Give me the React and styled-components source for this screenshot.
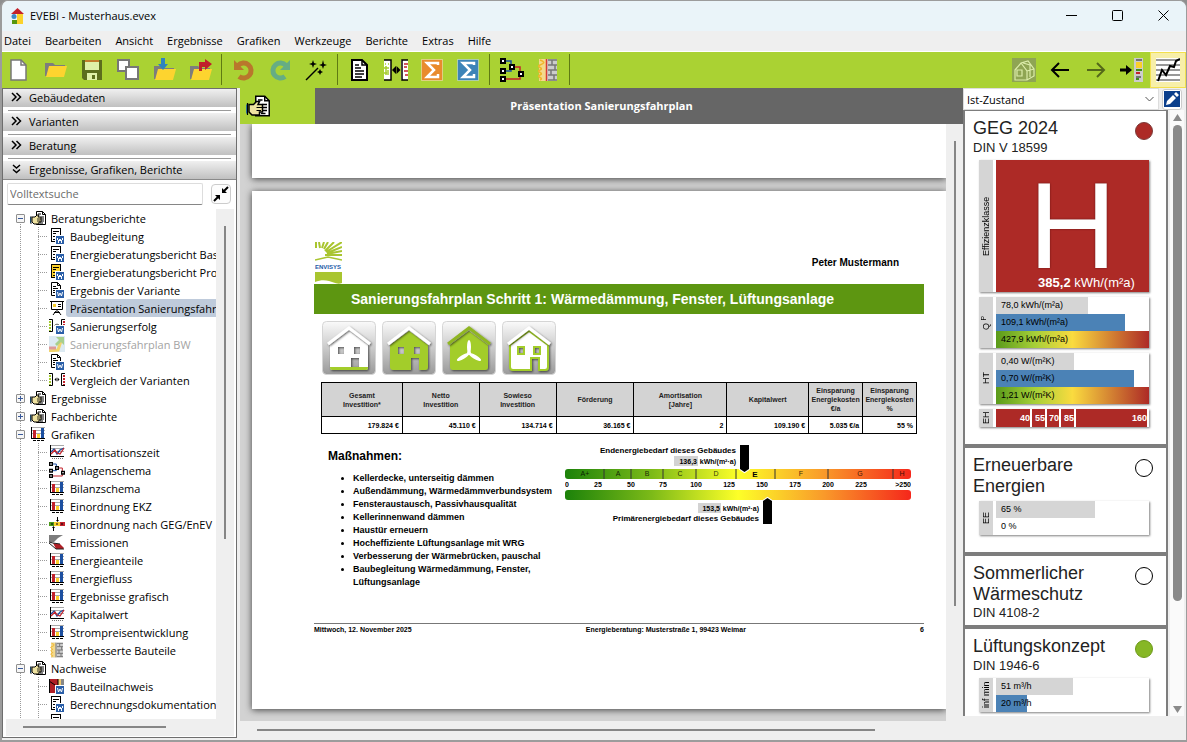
import React from 'react';
import styled, { createGlobalStyle } from 'styled-components';

const GlobalStyle = createGlobalStyle`
  * {
    box-sizing: border-box;
  }
  body {
    margin: 0;
    background: #8f8f8f;
    color: #000;
    font-family: 'Open Sans', 'Noto Sans', sans-serif;
    font-size: 11px;
  }
  button, input, select {
    font: inherit;
    color: inherit;
  }
`

/* ---------- window frame ---------- */

const Window = styled.div`
  display: flex;
  flex-direction: column;
  height: 100vh;
  overflow: hidden;
  border: solid #9c9c9c;
  border-width: 1px 1px 2px 2px;
  border-radius: 8px 8px 0 0;
  background: #efefef;
`

const TitleBar = styled.header`
  display: flex;
  align-items: center;
  flex: none;
  height: 30px;
  padding-left: 7px;
  background: #eaf4f9;
`

const Title = styled.h1`
  flex: 1;
  margin: 0 0 0 4px;
  padding-bottom: 2px;
  font-size: 11px;
  font-weight: 400;
`

const WindowButton = styled.button`
  display: grid;
  place-items: center;
  width: 46px;
  height: 30px;
  padding: 0 0 2px;
  border: 0;
  background: none;
`

const MenuBar = styled.nav`
  display: flex;
  align-items: center;
  flex: none;
  gap: 14px;
  height: 21px;
  padding: 0 0 2px 2px;
  border-bottom: 1px solid #fff;
`

const MenuItem = styled.button`
  padding: 0;
  border: 0;
  background: none;
`

const Toolbar = styled.div`
  display: flex;
  flex: none;
  height: 36px;
  background: #aad233;
`

const ToolButton = styled.button`
  display: grid;
  place-items: center;
  width: 36px;
  padding: 0;
  border: ${p => (p.$active ? '1px solid #f3e04e' : '0')};
  background: ${p => (p.$active ? '#f7efa9' : 'none')};
  opacity: ${p => (p.$faded ? 0.5 : 1)};
`

const ToolDivider = styled.div`
  width: 1px;
  margin: 2px 4px 3px 3px;
  background: #5f7a12;
`

const Spacer = styled.div`
  flex: 1;
`

const Main = styled.div`
  display: flex;
  flex: 1;
  min-height: 0;
`

/* ---------- left column ---------- */

const Sidebar = styled.aside`
  display: flex;
  flex-direction: column;
  flex: none;
  width: 235px;
  margin-bottom: 2px;
  border: 1px solid #6e6e6e;
  background: #fff;
`

const SectionButton = styled.button`
  display: flex;
  align-items: center;
  flex: none;
  gap: 7px;
  height: 18px;
  padding: 0 0 2px 8px;
  border: 0;
  background: linear-gradient(#f0f0f0, #c0c0c0);
  text-align: left;
`

const SectionRule = styled.div`
  flex: none;
  height: 1px;
  margin: 3px 5px 2px;
  background: #9a9a9a;
`

const SearchRow = styled.div`
  display: flex;
  align-items: center;
  flex: none;
  gap: 8px;
  height: 30px;
  padding: 0 5px 1px 4px;
  border-top: 1px solid #8a8a8a;
`

const SearchInput = styled.input`
  flex: 1;
  min-width: 0;
  height: 22px;
  padding: 0 2px 1px;
  border: 1px solid #ddd;
  border-bottom-color: #868686;
  border-radius: 2px;
  background: #fff;
  outline: 0;
  &::placeholder {
    color: #6b6b6b;
    opacity: 1;
  }
`

const CollapseButton = styled.button`
  display: grid;
  place-items: center;
  width: 20px;
  height: 20px;
  padding: 0;
  border: 1px solid #ccc;
  border-radius: 4px;
  background: #fdfdfd;
`

const TreeFrame = styled.div`
  display: grid;
  grid-template: minmax(0, 1fr) 17px / minmax(0, 1fr) 18px;
  flex: 1;
  min-height: 0;
  margin: 0 2px 1px 3px;
  background: #efefef;
`

const Tree = styled.ul`
  margin: 0;
  padding: 0;
  list-style: none;
  overflow: hidden;
  background: #fff;
`

const Row = styled.li`
  display: flex;
  align-items: center;
  height: 18px;
`

const dots = 'repeating-linear-gradient(#9a9a9a 0 1px, transparent 1px 2px)'
const dotsAcross = 'repeating-linear-gradient(90deg, #9a9a9a 0 1px, transparent 1px 2px)'

const RootGutter = styled.div`
  display: flex;
  align-items: center;
  flex: none;
  width: 24px;
  height: 18px;
  padding-left: 10px;
  background: ${dots} 14px ${p => (p.$first ? '9px' : '0')} / 1px 100% no-repeat;
`

const ChildGutter = styled.div`
  flex: none;
  width: 19px;
  height: 18px;
  background:
    ${dots} 8px 0 / 1px ${p => (p.$last ? '50%' : '100%')} no-repeat,
    ${dotsAcross} 8px 9px / 9px 1px no-repeat;
`

const Expander = styled.button`
  display: grid;
  place-items: center;
  width: 9px;
  height: 9px;
  padding: 0;
  border: 1px solid #8f8f8f;
  border-radius: 1px;
  background: #f6f6f6;
`

const RowIcon = styled.span`
  display: grid;
  flex: none;
  width: 17px;
  height: 16px;
`

const RowLabel = styled.button`
  flex: 1 0 auto;
  height: 18px;
  padding: 0 4px;
  border: 0;
  border-radius: 3px 0 0 3px;
  background: ${p => (p.$selected ? '#bfcbdb' : 'none')};
  color: ${p => (p.$disabled ? '#a3a3a3' : '#000')};
  line-height: 17px;
  text-align: left;
  white-space: nowrap;
`

const VTrack = styled.div`
  display: flex;
  justify-content: center;
  padding-top: ${p => p.$top};
`

const VThumb = styled.div`
  width: 2px;
  height: ${p => p.$length};
  background: #868686;
`

const HTrack = styled.div`
  display: flex;
  align-items: center;
  padding: 0 0 2px 17px;
`

const HThumb = styled.div`
  width: ${p => p.$length};
  height: 2px;
  background: #868686;
`

/* ---------- report view ---------- */

const Viewer = styled.main`
  display: flex;
  flex-direction: column;
  flex: 1;
  min-width: 0;
  margin-left: 3px;
`

const ViewerHeader = styled.div`
  display: flex;
  flex: none;
  height: 36px;
  background: #666;
`

const ViewerBadge = styled.div`
  display: flex;
  align-items: center;
  width: 75px;
  padding-left: 6px;
  background: #aad233;
`

const ViewerTitle = styled.h2`
  flex: 1;
  margin: 0;
  padding-right: 75px;
  color: #fff;
  font-size: 11px;
  font-weight: 700;
  line-height: 35px;
  text-align: center;
`

const ViewerBody = styled.div`
  display: grid;
  grid-template: minmax(0, 1fr) 19px / minmax(0, 1fr) 17px;
  flex: 1;
  min-height: 0;
`

const Canvas = styled.div`
  display: flex;
  flex-direction: column;
  gap: 13px;
  padding-left: 12px;
  overflow: hidden;
  background: #d2d2d2;
`

const Sheet = styled.article`
  display: flex;
  flex-direction: column;
  flex: none;
  min-height: ${p => p.$height};
  padding: 50px 22px 73px 62px;
  background: #fff;
  box-shadow: 0 1px 7px rgba(0, 0, 0, 0.7);
  font-family: 'Liberation Sans', Arial, sans-serif;
  font-weight: 700;
`

const PreviousSheet = styled(Sheet)`
  padding: 0;
`

const SheetHead = styled.div`
  display: flex;
  align-items: center;
  justify-content: space-between;
  height: 43px;
  padding: 0 25px 0 1px;
  font-size: 10px;
`

const Banner = styled.h3`
  margin: 0;
  padding-left: 37px;
  background: #5d9611;
  color: #fff;
  font-size: 14px;
  line-height: 30px;
`

const MeasureIcons = styled.div`
  display: flex;
  gap: 6px;
  padding: 7px 8px;
`

const CostTable = styled.table`
  margin: 0 7px;
  border-collapse: collapse;
  table-layout: fixed;
  font-size: 7px;
  line-height: 9px;
  th, td {
    border: 1px solid #000;
  }
  th {
    height: 34px;
    padding: 0;
    background: #d3d3d3;
    color: #222;
  }
  td {
    height: 17px;
    padding: 0 3px;
    text-align: right;
  }
`

const SheetColumns = styled.div`
  display: flex;
  padding: 10px 7px 0 14px;
`

const Measures = styled.section`
  flex: 0 1 237px;
`

const MeasuresTitle = styled.h4`
  margin: 5px 0 9px;
  font-size: 12px;
  line-height: 14px;
`

const MeasureList = styled.ul`
  margin: 0;
  padding: 0 0 0 25px;
  font-size: 9px;
  line-height: 13px;
`

const SheetFoot = styled.footer`
  display: flex;
  justify-content: space-between;
  margin-top: auto;
  border-top: 1px solid #777;
  font-size: 7px;
  line-height: 12px;
`

/* ---------- right column ---------- */

const Panel = styled.aside`
  display: flex;
  flex-direction: column;
  flex: none;
  width: 223px;
  margin-bottom: 24px;
`

const VariantRow = styled.div`
  display: flex;
  flex: none;
  align-items: center;
  gap: 3px;
  height: 22px;
`

const VariantPicker = styled.label`
  display: grid;
  flex: 0 0 196px;
  align-items: center;
  background: #fff;
  > * {
    grid-area: 1 / 1;
  }
  svg {
    justify-self: end;
    margin-right: 5px;
    pointer-events: none;
  }
`

const VariantSelect = styled.select`
  width: 100%;
  height: 22px;
  padding: 0 3px;
  border: 1px solid #ddd;
  background: #fff;
  appearance: none;
`

const EditButton = styled.button`
  display: grid;
  place-items: center;
  width: 20px;
  height: 21px;
  padding: 0;
  border: 1px solid #ccc;
  border-radius: 3px;
  background: #fff;
`

const PanelBody = styled.div`
  display: grid;
  grid-template-columns: 205px minmax(0, 1fr);
  flex: 1;
  min-height: 0;
`

const Cards = styled.div`
  display: flex;
  flex-direction: column;
  gap: 4px;
  padding: 1px 2px 0;
  overflow: hidden;
  background: #7d7d7d;
`

const Card = styled.section`
  flex: none;
  padding: 7px 13px ${p => p.$bottom || '17px'} 8px;
  background: #fff;
  color: #222;
  font-family: 'Liberation Sans', Arial, sans-serif;
`

const CardHead = styled.div`
  display: flex;
  justify-content: space-between;
`

const CardTitle = styled.h3`
  margin: 0;
  font-size: 18px;
  font-weight: 400;
  line-height: 21px;
`

const CardNorm = styled.div`
  font-size: 13px;
  line-height: 16px;
`

const Lamp = styled.span`
  flex: none;
  width: 18px;
  height: 18px;
  margin-top: 4px;
  border: 1px solid ${p => p.$edge};
  border-radius: 50%;
  background: ${p => p.$color};
`

const Gauge = styled.div`
  display: flex;
  gap: 3px;
  margin: 4px 4px 0 6px;
  box-shadow: 1px 1px 2px rgba(0, 0, 0, 0.5);
  & + & {
    margin-top: 5px;
  }
`

const GaugeName = styled.div`
  flex: none;
  width: 14px;
  background: #d5d5d5;
  color: #000;
  font-size: 9px;
  line-height: 14px;
  text-align: center;
  transform: rotate(180deg);
  writing-mode: vertical-rl;
  sub {
    font-size: 7px;
    line-height: 1px;
    vertical-align: 2px;
  }
`

const ClassBox = styled.div`
  display: flex;
  flex-direction: column;
  align-items: center;
  justify-content: flex-end;
  flex: 1;
  height: 132px;
  padding-bottom: 1px;
  background: #ad2a26;
  color: #fff;
`

const ClassLetter = styled.div`
  font-size: 122px;
  line-height: 98px;
  text-shadow: 0 0 2px #5a1010;
`

const ClassValue = styled.div`
  padding-left: 28px;
  font-size: 13px;
  line-height: 16px;
`

const Bars = styled.div`
  flex: 1;
  background: #fff;
`

const rainbow = 'linear-gradient(90deg, #5a9a1a, #a5cf38 25%, #fadb3f 50%, #ad2a26)'

const fills = {
  grey: '#d5d5d5',
  blue: '#4b82b6',
  rainbow,
  none: 'transparent',
}

const Bar = styled.div`
  height: 17px;
  padding-left: 5px;
  background: ${p => fills[p.$fill]};
  color: #000;
  font-size: 9px;
  line-height: 16px;
  white-space: nowrap;
`

const Steps = styled.div`
  display: flex;
  gap: 2px;
  flex: 1;
  padding-right: 2px;
`

const Step = styled.div`
  flex: ${p => p.$grow} 0 0;
  background: #ad2a26;
  color: #fff;
  font-size: 9px;
  font-weight: 700;
  line-height: 18px;
  text-align: right;
`

const PanelScroll = styled.div`
  display: flex;
  flex-direction: column;
  align-items: center;
  gap: 4px;
  margin: 0 2px;
  padding: 4px 0 3px;
  background: #fafafa;
`

const PanelThumb = styled.div`
  flex: 0 1 476px;
  width: 9px;
  margin-bottom: auto;
  border-radius: 5px;
  background: #8a8a8a;
`

/* ---------- drawings ---------- */

const Svg = ({ size = 24, children, ...rest }) => (
  <svg width={size} height={size} viewBox={`0 0 ${size} ${size}`} fill="none" aria-hidden="true" {...rest}>
    {children}
  </svg>
)

const AppLogo = () => (
  <Svg size={17}>
    <path d="M2 6 8.500 0 15 6z" fill="#c4222a" />
    <path d="M8 6h6v10H8z" fill="#fbd22c" />
    <circle cx="5" cy="8.500" r="2.500" fill="#3c8ac8" />
    <path d="M3 12h5v4H3z" fill="#56960f" />
  </Svg>
)

const NewFile = () => (
  <Svg>
    <path d="M3 2h10l5 5v15H3z" fill="#fff" stroke="#777" strokeWidth="1.500" />
    <path d="M13 2v5h5" stroke="#777" strokeWidth="1.500" />
  </Svg>
)

const Folder = () => (
  <>
    <path d="M2 8h8l2 2h10v3H6L4 21H2z" fill="#7d7d7d" />
    <path d="M6 11h18l-3 11H3z" fill="#fdd42f" />
  </>
)

const OpenFile = () => (
  <Svg>
    <g transform="translate(-1 -3)"><Folder /></g>
  </Svg>
)

const SaveFile = () => (
  <Svg>
    <path d="M2 2h20v20H4l-2-2z" fill="#5c6e1d" />
    <path d="M5 4h14v8H5z" fill="#dff0a8" />
    <path d="M5 2h14v2H5z" fill="#c27c2c" />
    <path d="M7 15h10v7H7z" fill="#dff0a8" />
    <path d="M12 17h3v4h-3z" fill="#5c6e1d" />
  </Svg>
)

const CopyFile = () => (
  <Svg>
    <path d="M2 2h11v11H2z" fill="#fff" stroke="#777" strokeWidth="2" />
    <path d="M10 9h12v12H10z" fill="#fff" stroke="#777" strokeWidth="2" />
  </Svg>
)

const ImportFile = () => (
  <Svg>
    <Folder />
    <path d="M9 0h4v6h3l-5 6-5-6h3z" fill="#2f84c0" />
  </Svg>
)

const ExportFile = () => (
  <Svg>
    <Folder />
    <path d="M11 13V4h6V1l7 5-7 6V9h-3v4z" fill="#c01f2b" />
  </Svg>
)

const Undo = () => (
  <Svg>
    <path d="M6 7.500a7.500 7.500 0 1 1 1 11" stroke="#b9772c" strokeWidth="5" />
    <path d="M2 2v10h10z" fill="#b9772c" />
  </Svg>
)

const Redo = () => (
  <Svg>
    <path d="M18 7.500a7.500 7.500 0 1 0-1 11" stroke="#66ad83" strokeWidth="5" />
    <path d="M22 2v10H12z" fill="#66ad83" />
  </Svg>
)

const Wand = () => (
  <Svg>
    <path d="M2 22 14 10" stroke="#000" strokeWidth="1.500" />
    <path d="m9 2 1 3 3 1-3 1-1 3-1-3-3-1 3-1zM19 2l1 4 3 1-3 1-1 3-1-3-3-1 3-1zM16 11l1 2 2 1-2 1-1 2-1-2-2-1 2-1z" fill="#000" />
  </Svg>
)

const Report = () => (
  <Svg>
    <path d="M4 2h10l5 5v15H4z" fill="#fff" stroke="#000" strokeWidth="2" />
    <path d="M14 2v5h5M7 7h4M7 10h6M7 13h9M7 16h9M7 19h7" stroke="#000" strokeWidth="1.500" />
  </Svg>
)

const Compare = () => (
  <Svg>
    <path d="M0 2h7v20H0z" fill="#fff" />
    <path d="M17 2h7v20h-7z" fill="#fff" />
    <path d="M0 2h7v20H0M24 2h-6v20h6" stroke="#000" strokeWidth="1.500" />
    <path d="M1 6h1m2 0h1M0 10h5M2 8v9M4 12v5M0 15h3" stroke="#a4cc2d" strokeWidth="1.500" />
    <path d="M20 6h4M20 9h3M20 13h4M21 17h3" stroke="#c3222b" strokeWidth="1.500" />
    <path d="m12 8-4 4 4 4zM12.500 8l4 4-4 4z" fill="#000" />
  </Svg>
)

const Sum = ({ color }) => (
  <Svg>
    <path d="M1.500 1.500h21v21h-21z" fill={color} stroke="#fff" strokeOpacity=".4" />
    <path d="M18 7V5H7l7 7-7 7h11v-3" stroke="#fff" strokeWidth="2.500" />
  </Svg>
)

const Schema = ({ size = 24 }) => (
  <svg width={size} height={size} viewBox="0 0 24 24" fill="none" aria-hidden="true">
    <path d="M3 3h8v6h4M3 13h8v-3" stroke="#1c4fa0" strokeWidth="1.500" />
    <path d="M13 9h7v12H3" stroke="#c3222b" strokeWidth="1.500" />
    {[[0, 0], [0, 10], [0, 18], [9, 6], [18, 13]].map(([x, y]) => (
      <path key={`${x}-${y}`} d={`M${x + 1} ${y + 1}h4v4h-4z`} fill="#fff" stroke="#000" strokeWidth="2" />
    ))}
  </svg>
)

const Wall = ({ size = 24 }) => (
  <svg width={size} height={size} viewBox="0 0 24 24" fill="none" aria-hidden="true">
    <path d="M3 1h18v22H3z" fill="#ccc" />
    <path d="M3 1h7v22H3z" fill="#f3d98c" />
    <path d="M4 2c5 2 5 3 0 5s5 3 0 5 5 3 0 5 5 3 0 5" stroke="#f1b52b" strokeWidth="1.500" />
    <path d="M10.500 1v22" stroke={size > 16 ? '#d93b34' : '#777'} strokeWidth="1.500" />
    <path d="M12 2h9M12 7h9M12 12h9M12 17h9M12 22h9M16 2v5M19 7v5M15 12v5M18 17v5" stroke="#777" strokeWidth="1.500" />
  </svg>
)

const House3d = () => (
  <Svg>
    <path d="M0 0h24v24H0z" fill="#8fa553" />
    <path d="M3 12 9 5l7-2 6 8v7l-7 4H3zM9 5l6 8v9M3 12v10M15 13l7-2M5 12h5v6H5zM11 5l7 2v12" stroke="#dcecaa" strokeWidth="1.200" />
  </Svg>
)

const Arrow = ({ flip }) => (
  <Svg>
    <path d={flip ? 'M3 12h17M13 5l7 7-7 7' : 'M21 12H4M11 5l-7 7 7 7'} stroke="#000" strokeWidth="2" />
  </Svg>
)

const DockRight = () => (
  <Svg>
    <path d="M0 12h6" stroke="#000" strokeWidth="3" />
    <path d="m6 7 6 5-6 5z" fill="#000" />
    <path d="M14 0h9v24h-9z" fill="#ccc" />
    <path d="M16 2h6M16 19h5" stroke="#555" strokeWidth="1.500" />
    <path d="M16 4h6v6h-6z" fill="#fbcf2b" />
    <path d="M16 12h6" stroke="#3f8c1c" strokeWidth="2" />
    <path d="M16 15h4" stroke="#c3222b" strokeWidth="2" />
    <path d="M16 21h3" stroke="#3f8c1c" strokeWidth="2" />
  </Svg>
)

const TrendChart = () => (
  <Svg>
    <path d="M0 0h24v24H0z" fill="#fff" />
    <path d="M0 2h24M0 7h24M0 12h24M0 17h24M0 22h24" stroke="#777" strokeWidth="1.500" />
    <path d="m2 23 4-11 4 5 4-9 4 1 2-6 4-2" stroke="#000" strokeWidth="2" />
  </Svg>
)

const Hand = ({ size = 16 }) => (
  <svg width={size} height={size} viewBox="0 0 16 16" fill="none" aria-hidden="true">
    <path d="M6.500 1.500h6l3 3v10h-9z" fill="#fff" stroke="#000" />
    <path d="M12.500 1.500v3h3M8 4h3M11 7h3M11 9h3M11 11h3M10 13h3" stroke="#000" />
    <path d="M2 7h3l2-2h2L8 7h3v5H9v2H4l-2-2z" fill="#efe3a0" stroke="#000" />
    <path d="M0 7h1v6H0z" fill="#2b78a8" />
    <path d="M1 6v8M7 9h4M7 11h3" stroke="#000" strokeWidth=".8" />
  </svg>
)

const WordMark = () => (
  <>
    <path d="M6 7h10v9H6z" fill="#fff" />
    <path d="M7 8h8v8H7z" fill="#2b5fa8" />
    <path d="m8.500 10 1 4 1.500-3 1.500 3 1-4" stroke="#fff" />
  </>
)

const DocIcon = ({ paper = '#fff' }) => (
  <Svg size={16} shapeRendering="crispEdges">
    <path d="M2.500.500h9v13h-9z" fill={paper} stroke="#000" />
    <path d="M4 3h6M4 5.500h3M4 8h6M4 11h2" stroke="#000" />
    <WordMark />
  </Svg>
)

const FoldedDocIcon = () => (
  <Svg size={16}>
    <path d="M2.500.500h6l3 3v10h-9z" fill="#fff" stroke="#000" />
    <path d="M8.500.500v3h3M4 4.500h3M4 6.500h5M4 8.500h2M4 10.500h2" stroke="#000" />
    <WordMark />
  </Svg>
)

const BoardIcon = () => (
  <Svg size={16}>
    <path d="M1 1.500h14M2.500 2v7.500h11V2" fill="#fff" stroke="#000" />
    <path d="M4 4h3v3H4z" fill="#f4cb2d" />
    <path d="M9 4.500h3M9 6.500h3M8 10v2M7 11l-3 4M9 11l3 4M5 12.500h6" stroke="#000" />
  </Svg>
)

const CompareIcon = ({ word }) => (
  <Svg size={16}>
    <path d="M0 1.500h3.500v12H0M16 1.500h-3.500v12H16" stroke="#000" />
    <path d="M1 3v10" stroke="#a4cc2d" strokeWidth="2" strokeDasharray="2 1" />
    <path d="M15 3v10" stroke="#c3222b" strokeWidth="2" strokeDasharray="2 1" />
    <path d="m7.500 5.500-2 2 2 2zM8.500 5.500l2 2-2 2z" fill="#000" />
    {word && <WordMark />}
  </Svg>
)

const RoadmapIcon = () => (
  <Svg size={16}>
    <path d="M0 0h16v16H0z" fill="#dceaf2" />
    <path d="m0 15 9-1 3-9" stroke="#f0d36b" strokeWidth="3" />
    <path d="M0 12h7" stroke="#dd9a9a" strokeWidth="3" />
    <path d="M7 1h8v8l-3-3-4 4-2-2 4-4z" fill="#a8cf8c" />
  </Svg>
)

const ChartIcon = () => (
  <Svg size={16} shapeRendering="crispEdges">
    <path d="M1 1.500h14M1 4.500h14M1 7.500h14" stroke="#aaa" />
    <path d="M3 4h3v8H3z" fill="#c3222b" />
    <path d="M7 8h3v4H7z" fill="#fbcf2b" />
    <path d="M11 2h3v10h-3z" fill="#1c4fa0" />
    <path d="M1.500 1v12M1 12.500h14" stroke="#000" />
    <path d="M3 14.500h12" stroke="#000" strokeDasharray="3 1" />
  </Svg>
)

const CurveIcon = () => (
  <Svg size={16}>
    <path d="M1 1.500h14M1 4.500h14M1 7.500h14" stroke="#aaa" />
    <path d="M1.500 1v11.500H15" stroke="#000" />
    <path d="m2 8 3-3 3 5 3-4 4-2" stroke="#1c4fa0" strokeWidth="1.300" />
    <path d="m2 10 4-4 2 3 3 1 4-6" stroke="#c3222b" strokeWidth="1.300" />
    <path d="M3 14.500h12" stroke="#777" strokeDasharray="1 1" />
  </Svg>
)

const ScaleIcon = () => (
  <Svg size={16}>
    <path d="M0 6h5v4H0z" fill="#4c9a1c" />
    <path d="M5 6h6v4H5z" fill="#fbcf2b" />
    <path d="M11 6h5v4h-5z" fill="#c3222b" />
    <path d="M8.500 1v4M4.500 11v4M2 8h2M7 8h2M12 8h2" stroke="#000" />
    <path d="M7 4h3L8.500 6zM3 12h3l-1.500-2z" fill="#000" />
  </Svg>
)

const SmokeIcon = () => (
  <Svg size={16}>
    <path d="M0 1h14L9 4 5 8H0z" fill="#7d7d7d" />
    <path d="m4 9 7 1 4 4-1 1H7z" fill="#b01f26" />
    <path d="m0 8 4 1 7 1M0 9l7 6h8" stroke="#222" />
  </Svg>
)

const PartIcon = () => (
  <Svg size={16}>
    <path d="M0 1h9v14H0z" fill="#b01f26" />
    <path d="M9 1h3v14H9z" fill="#f0c96e" />
    <path d="M12 1h3v14h-3z" fill="#888" />
    <path d="M.5 1v14M0 3l9 6V1" stroke="#000" />
    <WordMark />
  </Svg>
)

const Chevrons = ({ down }) => (
  <svg width="11" height="10" viewBox="0 0 11 10" fill="none" aria-hidden="true">
    <path
      d={down ? 'M2 1l3.500 3L9 1M2 5.500l3.500 3 3.500-3' : 'M1 1l4 4-4 4M5.500 1l4 4-4 4'}
      stroke="#000"
      strokeWidth="1.500"
    />
  </svg>
)

const EnvisysLogo = () => (
  <svg width="27" height="42" viewBox="0 0 27 42" fill="none" role="img" aria-label="ENVISYS">
    <path
      d="M1 0v6M4 0l1 6M9 0 7 6M13 0 9 7M19 0l-9 9M27 0 11 10M27 5l-15 6M27 9l-15 3M27 13H10"
      stroke="#a9c52f"
      strokeWidth="2"
    />
    <path d="m0 18 13-3 14 3" stroke="#a9c52f" strokeWidth="1.500" />
    <text x="0" y="27" fill="#1c5aa6" fontFamily="Liberation Sans" fontSize="6" fontWeight="700">ENVISYS</text>
    <path d="M0 30h27v11c-5 2-9-1-13-2s-9-1-14 1z" fill="#a9c52f" />
  </svg>
)

const HouseTile = ({ id, body, roof, windows, floor, outline, rotor }) => (
  <svg width="54" height="54" viewBox="0 0 54 54" fill="none" aria-hidden="true">
    <defs>
      <linearGradient id={id} x1="0" y1="0" x2="0" y2="1">
        <stop offset="0" stopColor="#fafafa" />
        <stop offset="1" stopColor="#9a9a9a" />
      </linearGradient>
      <filter id={`${id}-shadow`} x="-20%" y="-20%" width="140%" height="140%">
        <feDropShadow dx="1" dy="1" stdDeviation="1" floodOpacity=".6" />
      </filter>
    </defs>
    <rect x=".5" y=".5" width="53" height="53" rx="4" fill={`url(#${id})`} stroke="#d5d5d5" />
    <g filter={`url(#${id}-shadow)`}>
      <path
        d={windows
          ? 'M8 24 27 10l19 14v22q0 3-3 3h-6V37h-8v12H11q-3 0-3-3zM16 26v7h6v-7zM32 26v7h6v-7z'
          : 'M8 24 27 10l19 14v22q0 3-3 3H11q-3 0-3-3z'}
        fill={body}
        fillRule="evenodd"
        stroke={outline ? '#a3cd2c' : 'none'}
        strokeWidth="2"
      />
      {floor && <path d="M8 46h38v1q0 2-2 2H10q-2 0-2-2z" fill="#a3cd2c" />}
    </g>
    <g filter={`url(#${id}-shadow)`}>
      <path d="M6 23 27 7l21 16" stroke={roof} strokeWidth="3" />
    </g>
    {rotor && (
      <g fill="#fff">
        <ellipse cx="27" cy="26" rx="2" ry="7" />
        <ellipse cx="21" cy="36" rx="2" ry="7" transform="rotate(60 21 36)" />
        <ellipse cx="33" cy="36" rx="2" ry="7" transform="rotate(-60 33 36)" />
        <circle cx="27" cy="32" r="2" />
      </g>
    )}
  </svg>
)

const letters = [['A+', 20], ['A', 53], ['B', 82], ['C', 115], ['D', 151], ['F', 236], ['G', 295], ['H', 337]]
const ticks = [39, 66, 98, 131, 171, 210, 263, 328]
const numbers = [['25', 33], ['50', 66], ['75', 98], ['100', 131], ['125', 164], ['150', 197], ['175', 230], ['200', 263], ['225', 296]]

const EnergyScale = () => (
  <svg width="346" height="82" viewBox="0 0 346 82" fontFamily="Liberation Sans" fontWeight="700" fill="#000">
    <defs>
      <linearGradient id="energy">
        <stop offset="0" stopColor="#1c820a" />
        <stop offset=".25" stopColor="#7cba18" />
        <stop offset=".5" stopColor="#fdff28" />
        <stop offset=".75" stopColor="#f9992a" />
        <stop offset="1" stopColor="#f5271b" />
      </linearGradient>
    </defs>
    <text x="171" y="9" fontSize="8" textAnchor="end">Endenergiebedarf dieses Gebäudes</text>
    <rect x="109" y="12" width="24" height="10" fill="#d3d3d3" />
    <text x="132" y="20" fontSize="7" textAnchor="end">136,3</text>
    <text x="171" y="20" fontSize="7" textAnchor="end">kWh/(m²·a)</text>
    <rect y="25" width="346" height="10" rx="3" fill="url(#energy)" />
    {ticks.map(x => <path key={x} d={`M${x} 25v10`} stroke="#333" />)}
    {letters.map(([t, x]) => (
      <text key={t} x={x} y="32" fontSize="7" textAnchor="middle" fontWeight="400" fillOpacity=".8">{t}</text>
    ))}
    <text x="190" y="33" fontSize="8" textAnchor="middle">E</text>
    <text x="0" y="43" fontSize="7">0</text>
    {numbers.map(([t, x]) => <text key={t} x={x} y="43" fontSize="7" textAnchor="middle">{t}</text>)}
    <text x="346" y="43" fontSize="7" textAnchor="end">&gt;250</text>
    <rect y="46" width="346" height="10" rx="3" fill="url(#energy)" />
    <path d="M175 1h9v24l-4.500 3-4.500-3z" stroke="#fff" strokeWidth="2" paintOrder="stroke" />
    <path d="M198 80h9V57l-4.500-3-4.500 3z" stroke="#fff" strokeWidth="2" paintOrder="stroke" />
    <rect x="133" y="59" width="23" height="10" fill="#d3d3d3" />
    <text x="155" y="67" fontSize="7" textAnchor="end">153,5</text>
    <text x="194" y="67" fontSize="7" textAnchor="end">kWh/(m²·a)</text>
    <text x="194" y="77" fontSize="8" textAnchor="end">Primärenergiebedarf dieses Gebäudes</text>
  </svg>
)

/* ---------- content ---------- */

const menus = ['Datei', 'Bearbeiten', 'Ansicht', 'Ergebnisse', 'Grafiken', 'Werkzeuge', 'Berichte', 'Extras', 'Hilfe']

const toolGroups = [
  [['Neu', <NewFile />], ['Öffnen', <OpenFile />], ['Speichern', <SaveFile />], ['Kopieren', <CopyFile />], ['Importieren', <ImportFile />], ['Exportieren', <ExportFile />]],
  [['Rückgängig', <Undo />], ['Wiederholen', <Redo />], ['Assistent', <Wand />]],
  [['Bericht', <Report />], ['Vergleich', <Compare />], ['Summe Kosten', <Sum color="#e98b2d" />], ['Summe Energie', <Sum color="#3d84b8" />]],
  [['Anlagenschema', <Schema />], ['Bauteile', <Wall />]],
]

const tree = [
  {
    label: 'Beratungsberichte',
    icon: <Hand />,
    children: [
      ['Baubegleitung', <DocIcon />],
      ['Energieberatungsbericht Basis', <DocIcon />],
      ['Energieberatungsbericht Profi', <DocIcon paper="#fbd22c" />],
      ['Ergebnis der Variante', <FoldedDocIcon />],
      ['Präsentation Sanierungsfahrplan', <BoardIcon />, 'selected'],
      ['Sanierungserfolg', <CompareIcon word />],
      ['Sanierungsfahrplan BW', <RoadmapIcon />, 'disabled'],
      ['Steckbrief', <FoldedDocIcon />],
      ['Vergleich der Varianten', <CompareIcon />],
    ],
  },
  { label: 'Ergebnisse', icon: <Hand /> },
  { label: 'Fachberichte', icon: <Hand /> },
  {
    label: 'Grafiken',
    icon: <ChartIcon />,
    children: [
      ['Amortisationszeit', <CurveIcon />],
      ['Anlagenschema', <Schema size={16} />],
      ['Bilanzschema', <ChartIcon />],
      ['Einordnung EKZ', <ChartIcon />],
      ['Einordnung nach GEG/EnEV', <ScaleIcon />],
      ['Emissionen', <SmokeIcon />],
      ['Energieanteile', <ChartIcon />],
      ['Energiefluss', <ChartIcon />],
      ['Ergebnisse grafisch', <ChartIcon />],
      ['Kapitalwert', <CurveIcon />],
      ['Strompreisentwicklung', <ChartIcon />],
      ['Verbesserte Bauteile', <Wall size={16} />],
    ],
  },
  {
    label: 'Nachweise',
    icon: <Hand />,
    children: [
      ['Bauteilnachweis', <PartIcon />],
      ['Berechnungsdokumentation', <DocIcon />],
      ['Bestandsaufnahme', <DocIcon />],
    ],
  },
]

const costs = [
  [['Gesamt', 'Investition*'], '179.824 €', 81],
  [['Netto', 'Investition'], '45.110 €', 77],
  [['Sowieso', 'Investition'], '134.714 €', 77],
  [['Förderung'], '36.165 €', 78],
  [['Amortisation', '[Jahre]'], '2', 93],
  [['Kapitalwert'], '109.190 €', 82],
  [['Einsparung', 'Energiekosten', '€/a'], '5.035 €/a', 54],
  [['Einsparung', 'Energiekosten', '%'], '55 %', 54],
]

const measures = [
  'Kellerdecke, unterseitig dämmen',
  'Außendämmung, Wärmedämmverbundsystem',
  'Fensteraustausch, Passivhausqualität',
  'Kellerinnenwand dämmen',
  'Haustür erneuern',
  'Hocheffiziente Lüftungsanlage mit WRG',
  'Verbesserung der Wärmebrücken, pauschal',
  'Baubegleitung Wärmedämmung, Fenster, Lüftungsanlage',
]

function TreeBranch({ node, first }) {
  const children = node.children || []
  return (
    <>
      <Row>
        <RootGutter $first={first}>
          <Expander aria-label={node.label} aria-expanded={children.length > 0}>
            <svg width="7" height="7" viewBox="0 0 7 7" aria-hidden="true">
              <path d={children.length ? 'M1 3.500h5' : 'M1 3.500h5M3.500 1v5'} stroke="#3a5a9a" />
            </svg>
          </Expander>
        </RootGutter>
        <RowIcon>{node.icon}</RowIcon>
        <RowLabel>{node.label}</RowLabel>
      </Row>
      {children.map(([label, icon, state], i) => (
        <Row key={label}>
          <RootGutter />
          <ChildGutter $last={i === children.length - 1} />
          <RowIcon>{icon}</RowIcon>
          <RowLabel $selected={state === 'selected'} $disabled={state === 'disabled'} disabled={state === 'disabled'}>
            {label}
          </RowLabel>
        </Row>
      ))}
    </>
  )
}

function ResultGauge({ name, bars }) {
  return (
    <Gauge>
      <GaugeName>{name}</GaugeName>
      <Bars>
        {bars.map(([text, fill, width]) => (
          <Bar key={text} $fill={fill} style={{ width: `${width}%` }}>{text}</Bar>
        ))}
      </Bars>
    </Gauge>
  )
}

function NavigationPane() {
  return (
    <Sidebar>
      {['Gebäudedaten', 'Varianten', 'Beratung'].map(name => (
        <React.Fragment key={name}>
          <SectionButton><Chevrons />{name}</SectionButton>
          <SectionRule />
        </React.Fragment>
      ))}
      <SectionButton aria-expanded="true"><Chevrons down />Ergebnisse, Grafiken, Berichte</SectionButton>
      <SearchRow>
        <SearchInput aria-label="Volltextsuche" placeholder="Volltextsuche" />
        <CollapseButton aria-label="Alles einklappen">
          <Svg size={16}>
            <path d="m1 15 4-4M15 1l-4 4" stroke="#000" strokeWidth="2" />
            <path d="M2 9h5v5zM14 7H9V2z" fill="#000" />
          </Svg>
        </CollapseButton>
      </SearchRow>
      <TreeFrame>
        <Tree>
          {tree.map((node, i) => <TreeBranch key={node.label} node={node} first={i === 0} />)}
        </Tree>
        <VTrack $top="17px"><VThumb $length="313px" /></VTrack>
        <HTrack><HThumb $length="143px" /></HTrack>
      </TreeFrame>
    </Sidebar>
  )
}

function ReportSheet() {
  const total = costs.reduce((sum, c) => sum + c[2], 0)
  return (
    <Sheet $height="518px">
      <SheetHead>
        <EnvisysLogo />
        <span>Peter Mustermann</span>
      </SheetHead>
      <Banner>Sanierungsfahrplan Schritt 1: Wärmedämmung, Fenster, Lüftungsanlage</Banner>
      <MeasureIcons>
        <HouseTile id="floor" body="#fff" roof="#fff" windows floor />
        <HouseTile id="wall" body="#a3cd2c" roof="#fff" windows />
        <HouseTile id="air" body="#a3cd2c" roof="#8fb624" rotor />
        <HouseTile id="window" body="#fff" roof="#fff" windows outline />
      </MeasureIcons>
      <CostTable>
        <colgroup>
          {costs.map((c, i) => <col key={i} style={{ width: `${(c[2] / total) * 100}%` }} />)}
        </colgroup>
        <thead>
          <tr>
            {costs.map(([head], i) => (
              <th key={i} scope="col">{head.map(line => <div key={line}>{line}</div>)}</th>
            ))}
          </tr>
        </thead>
        <tbody>
          <tr>{costs.map(([, value]) => <td key={value}>{value}</td>)}</tr>
        </tbody>
      </CostTable>
      <SheetColumns>
        <Measures>
          <MeasuresTitle>Maßnahmen:</MeasuresTitle>
          <MeasureList>
            {measures.map(m => <li key={m}>{m}</li>)}
          </MeasureList>
        </Measures>
        <EnergyScale />
      </SheetColumns>
      <SheetFoot>
        <span>Mittwoch, 12. November 2025</span>
        <span>Energieberatung: Musterstraße 1, 99423 Weimar</span>
        <span>6</span>
      </SheetFoot>
    </Sheet>
  )
}

function ResultPanel() {
  return (
    <Panel>
      <VariantRow>
        <VariantPicker>
          <VariantSelect aria-label="Variante">
            <option>Ist-Zustand</option>
          </VariantSelect>
          <svg width="9" height="6" viewBox="0 0 9 6" fill="none" aria-hidden="true">
            <path d="m.5 1 4 4 4-4" stroke="#555" />
          </svg>
        </VariantPicker>
        <EditButton aria-label="Bearbeiten">
          <Svg size={16}>
            <path d="M0 0h16v16H0z" fill="#0b3f8c" />
            <path d="m2 14 1-4 6-6 3 3-6 6zM10 3l2-2 3 3-2 2z" fill="#fff" />
          </Svg>
        </EditButton>
      </VariantRow>
      <PanelBody>
        <Cards>
          <Card>
            <CardHead>
              <CardTitle>GEG 2024</CardTitle>
              <Lamp $color="#ad2a26" $edge="#7c3a38" />
            </CardHead>
            <CardNorm>DIN V 18599</CardNorm>
            <Gauge>
              <GaugeName>Effizienzklasse</GaugeName>
              <ClassBox>
                <ClassLetter>H</ClassLetter>
                <ClassValue><b>385,2</b> kWh/(m²a)</ClassValue>
              </ClassBox>
            </Gauge>
            <ResultGauge
              name={<>Q <sub>P</sub></>}
              bars={[['78,0 kWh/(m²a)', 'grey', 60], ['109,1 kWh/(m²a)', 'blue', 84], ['427,9 kWh/(m²a)', 'rainbow', 100]]}
            />
            <ResultGauge
              name="HT"
              bars={[['0,40 W/(m²K)', 'grey', 51], ['0,70 W/(m²K)', 'blue', 90], ['1,21 W/(m²K)', 'rainbow', 100]]}
            />
            <Gauge>
              <GaugeName>EH</GaugeName>
              <Steps>
                {[[40, 34], [55, 13], [70, 12], [85, 13], [160, 71]].map(([value, grow]) => (
                  <Step key={value} $grow={grow}>{value}</Step>
                ))}
              </Steps>
            </Gauge>
          </Card>
          <Card>
            <CardHead>
              <CardTitle>Erneuerbare<br />Energien</CardTitle>
              <Lamp $color="#fff" $edge="#000" />
            </CardHead>
            <ResultGauge name="EE" bars={[['65 %', 'grey', 65], ['0 %', 'none', 100]]} />
          </Card>
          <Card $bottom="4px">
            <CardHead>
              <CardTitle>Sommerlicher<br />Wärmeschutz</CardTitle>
              <Lamp $color="#fff" $edge="#000" />
            </CardHead>
            <CardNorm>DIN 4108-2</CardNorm>
          </Card>
          <Card>
            <CardHead>
              <CardTitle>Lüftungskonzept</CardTitle>
              <Lamp $color="#86b725" $edge="#6d9a1a" />
            </CardHead>
            <CardNorm>DIN 1946-6</CardNorm>
            <ResultGauge name="inf min" bars={[['51 m³/h', 'grey', 50], ['20 m³/h', 'blue', 20]]} />
          </Card>
        </Cards>
        <PanelScroll>
          <svg width="9" height="7" viewBox="0 0 9 7" aria-hidden="true"><path d="M4.500 0 9 7H0z" fill="#8a8a8a" /></svg>
          <PanelThumb />
          <svg width="9" height="7" viewBox="0 0 9 7" aria-hidden="true"><path d="M0 0h9L4.500 7z" fill="#8a8a8a" /></svg>
        </PanelScroll>
      </PanelBody>
    </Panel>
  )
}

function App() {
  return (
    <>
      <GlobalStyle />
      <Window>
        <TitleBar>
          <AppLogo />
          <Title>EVEBI - Musterhaus.evex</Title>
          <WindowButton aria-label="Minimieren">
            <Svg size={11}><path d="M0 5.500h11" stroke="#000" /></Svg>
          </WindowButton>
          <WindowButton aria-label="Maximieren">
            <Svg size={11}><rect x=".5" y=".5" width="10" height="10" rx="1" stroke="#000" /></Svg>
          </WindowButton>
          <WindowButton aria-label="Schließen">
            <Svg size={11}><path d="m.5.5 10 10M10.500.5l-10 10" stroke="#000" /></Svg>
          </WindowButton>
        </TitleBar>
        <MenuBar>
          {menus.map(name => <MenuItem key={name}>{name}</MenuItem>)}
        </MenuBar>
        <Toolbar>
          {toolGroups.map((group, i) => (
            <React.Fragment key={i}>
              {group.map(([name, icon]) => <ToolButton key={name} aria-label={name}>{icon}</ToolButton>)}
              <ToolDivider />
            </React.Fragment>
          ))}
          <Spacer />
          <ToolButton aria-label="3D-Ansicht"><House3d /></ToolButton>
          <ToolButton aria-label="Zurück"><Arrow /></ToolButton>
          <ToolButton aria-label="Vor" $faded><Arrow flip /></ToolButton>
          <ToolButton aria-label="Andocken"><DockRight /></ToolButton>
          <ToolButton aria-label="Ergebnisleiste" $active><TrendChart /></ToolButton>
        </Toolbar>
        <Main>
          <NavigationPane />
          <Viewer>
            <ViewerHeader>
              <ViewerBadge><Hand size={24} /></ViewerBadge>
              <ViewerTitle>Präsentation Sanierungsfahrplan</ViewerTitle>
            </ViewerHeader>
            <ViewerBody>
              <Canvas>
                <PreviousSheet $height="54px" />
                <ReportSheet />
              </Canvas>
              <VTrack $top="17px"><VThumb $length="465px" /></VTrack>
              <HTrack><HThumb $length="618px" /></HTrack>
            </ViewerBody>
          </Viewer>
          <ResultPanel />
        </Main>
      </Window>
    </>
  )
}

export default App;
